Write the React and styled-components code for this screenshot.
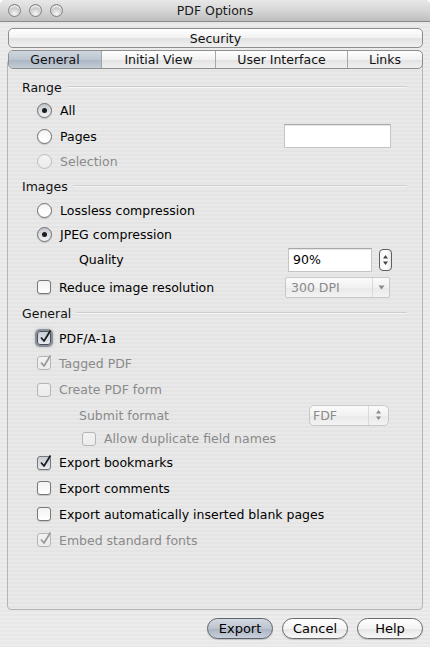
import React from 'react';
import styled, { createGlobalStyle, css } from 'styled-components';

const GlobalStyle = createGlobalStyle`
  html, body {
    margin: 0;
    padding: 0;
    background: #fff;
  }
  body {
    font-family: "DejaVu Sans", "Liberation Sans", sans-serif;
    font-size: 12.5px;
    color: #000;
  }
  * { box-sizing: border-box; }
`;

const stripes = css`
  background: repeating-linear-gradient(to bottom, #ececec 0, #ececec 2px, #e7e7e7 2px, #e7e7e7 4px);
`;

const Window = styled.div`
  width: 430px;
  height: 647px;
  display: flex;
  flex-direction: column;
  border-radius: 5px 5px 0 0;
  overflow: hidden;
  ${stripes}
`;

const TitleBar = styled.div`
  height: 22px;
  flex: none;
  display: grid;
  grid-template-columns: 1fr auto 1fr;
  align-items: center;
  padding: 0 8px;
  background: linear-gradient(#e8e8e8, #d6d6d6 50%, #bebebe);
  border-bottom: 1px solid #8a8a8a;
  font-size: 12.5px;
  color: #1a1a1a;
`;

const Lights = styled.div`
  display: flex;
  gap: 8px;
`;

const Light = styled.span`
  width: 13px;
  height: 13px;
  border-radius: 50%;
  border: 1px solid #808080;
  background: radial-gradient(circle at 50% 80%, #f6f6f6 0, #cfcfcf 50%, #9e9e9e 100%);
  box-shadow: inset 0 2px 1px rgba(255,255,255,0.7);
`;

const Body = styled.div`
  flex: 1;
  display: flex;
  flex-direction: column;
  padding: 6px 7px 0;
`;

const TabStrip = styled.div`
  position: relative;
  z-index: 1;
  margin: 0 0 0 1px;
  display: flex;
  flex-direction: column;
  gap: 2px;
`;

const segBg = css`
  background: linear-gradient(#ffffff, #f1f1f1 50%, #e2e2e2 51%, #f0f0f0);
`;

const SecurityTab = styled.div`
  height: 20px;
  border: 1px solid #8d8d8d;
  border-radius: 5px;
  ${segBg}
  display: flex;
  align-items: center;
  justify-content: center;
  color: #111;
`;

const TabRow = styled.div`
  height: 19px;
  display: flex;
  border: 1px solid #8d8d8d;
  border-radius: 5px;
  overflow: hidden;
  ${segBg}
`;

const Tab = styled.div`
  width: ${p => p.w}px;
  flex: ${p => (p.grow ? 1 : 'none')};
  display: flex;
  align-items: center;
  justify-content: center;
  border-left: ${p => (p.first ? 'none' : '1px solid #a6a6a6')};
  color: #111;
  ${p => p.active && css`
    background: linear-gradient(#cfd6df, #bcc5d1 50%, #aab5c4 51%, #c3ccd7);
  `}
`;

const Panel = styled.div`
  flex: 1;
  margin-top: -10px;
  border: 1px solid #b4b4b4;
  border-radius: 4px;
  padding: 16px 15px 0 14px;
  display: flex;
  flex-direction: column;
  background: repeating-linear-gradient(to bottom, #e9e9e9 0, #e9e9e9 2px, #e4e4e4 2px, #e4e4e4 4px);
`;

const Header = styled.div`
  height: ${p => p.h}px;
  display: flex;
  align-items: center;
  gap: 5px;
  color: #111;
`;

const Rule = styled.div`
  flex: 1;
  height: 2px;
  border-top: 1px solid #cdcdcd;
  border-bottom: 1px solid #f6f6f6;
  margin-top: -1px;
`;

const Row = styled.div`
  height: ${p => p.h}px;
  display: flex;
  align-items: center;
  padding-left: ${p => p.indent}px;
  gap: 8px;
`;

const Label = styled.span`
  color: ${p => (p.disabled ? '#8a8a8a' : '#000')};
  white-space: nowrap;
`;

const Right = styled.div`
  margin-left: auto;
  margin-right: ${p => p.mr}px;
  display: flex;
  align-items: center;
  gap: 7px;
`;

const RadioBox = styled.span`
  width: 15px;
  height: 15px;
  border-radius: 50%;
  flex: none;
  display: flex;
  align-items: center;
  justify-content: center;
  border: 1px solid ${p => (p.disabled ? '#bdbdbd' : '#6e6e6e')};
  background: ${p => p.checked
    ? 'linear-gradient(#c4c8cd, #dfe2e6 60%, #f2f3f5)'
    : p.disabled ? 'linear-gradient(#f3f3f3, #ececec)' : 'linear-gradient(#f2f2f2, #ffffff 70%, #ffffff)'};
  box-shadow: ${p => (p.disabled ? 'none' : '0 1px 1px rgba(0,0,0,0.15)')};
`;

const Dot = styled.span`
  width: 5px;
  height: 5px;
  border-radius: 50%;
  background: #1c1c1c;
`;

const CheckBox = styled.span`
  width: 14px;
  height: 14px;
  flex: none;
  border-radius: 3px;
  display: flex;
  align-items: center;
  justify-content: center;
  border: 1px solid ${p => (p.disabled ? '#b5b5b5' : p.focus ? '#4a4f58' : '#777')};
  background: ${p => p.disabled
    ? 'linear-gradient(#f2f2f2, #ececec)'
    : p.checked ? 'linear-gradient(#c9ced5, #e6e9ee)' : 'linear-gradient(#f2f2f2, #ffffff)'};
  box-shadow: ${p => (p.focus
    ? '0 0 0 2px rgba(90,100,115,0.55), 0 0 3px 2px rgba(90,100,115,0.35)'
    : p.disabled ? 'none' : '0 1px 1px rgba(0,0,0,0.15)')};
  position: relative;
`;

const Mark = styled.svg`
  position: absolute;
  left: 1px;
  top: -3px;
  overflow: visible;
`;

const Field = styled.div`
  width: ${p => p.w}px;
  height: ${p => p.h}px;
  background: #fff;
  border: 1px solid #c4c4c4;
  border-top-color: #a9a9a9;
  box-shadow: inset 0 1px 0 #e6e6e6;
  display: flex;
  align-items: center;
  padding-left: 4px;
`;

const StepperBox = styled.div`
  width: 13px;
  height: 22px;
  border: 1px solid #5f5f5f;
  border-radius: 4px;
  background: linear-gradient(to right, #f6f6f6, #ffffff 50%, #e9e9e9);
  display: flex;
  align-items: center;
  justify-content: center;
`;

const SelectBox = styled.div`
  width: ${p => p.w}px;
  height: ${p => p.h}px;
  border: 1px solid #c8c8c8;
  border-radius: ${p => p.r}px;
  background: linear-gradient(#fbfbfb, #f1f1f1 50%, #e9e9e9 51%, #f3f3f3);
  display: flex;
  align-items: stretch;
  color: #8a8a8a;
`;

const SelectText = styled.span`
  flex: 1;
  display: flex;
  align-items: center;
  padding-left: ${p => p.pl}px;
`;

const SelectArrow = styled.span`
  width: ${p => p.w}px;
  border-left: 1px solid #dadada;
  display: flex;
  align-items: center;
  justify-content: center;
`;

const Footer = styled.div`
  height: 37px;
  flex: none;
  display: flex;
  justify-content: flex-end;
  align-items: flex-start;
  padding-top: 8px;
  gap: 9px;
`;

const Button = styled.div`
  width: 66px;
  height: 21px;
  border-radius: 11px;
  border: 1px solid ${p => (p.primary ? '#5b6270' : '#6a6a6a')};
  background: ${p => p.primary
    ? 'linear-gradient(#d3d9e1, #bcc4cf 50%, #a9b3c1 51%, #c9d0da)'
    : 'linear-gradient(#ffffff, #f4f4f4 50%, #e6e6e6 51%, #f7f7f7)'};
  box-shadow: 0 1px 1px rgba(0,0,0,0.18);
  display: flex;
  align-items: center;
  justify-content: center;
  font-size: 13px;
  color: #000;
`;

function Radio({ checked, disabled }) {
  return (
    <RadioBox checked={checked} disabled={disabled}>
      {checked && <Dot />}
    </RadioBox>
  );
}

function Check({ checked, disabled, focus }) {
  return (
    <CheckBox checked={checked} disabled={disabled} focus={focus}>
      {checked && (
        <Mark width="13" height="15" viewBox="0 0 13 15">
          <path d="M2 8.5 L5 12 L11.5 1.5" fill="none" stroke={disabled ? '#9a9a9a' : '#1e1e1e'} strokeWidth="1.8" strokeLinejoin="round" />
        </Mark>
      )}
    </CheckBox>
  );
}

function Section({ title, h }) {
  return (
    <Header h={h}>
      <span>{title}</span>
      <Rule />
    </Header>
  );
}

function UpDown({ color }) {
  return (
    <svg width="7" height="12" viewBox="0 0 7 12">
      <path d="M3.5 1 L6 4.5 L1 4.5 Z" fill={color} />
      <path d="M3.5 11 L6 7.5 L1 7.5 Z" fill={color} />
    </svg>
  );
}

export default function App() {
  return (
    <>
      <GlobalStyle />
      <Window>
        <TitleBar>
          <Lights>
            <Light />
            <Light />
            <Light />
          </Lights>
          <span>PDF Options</span>
          <span />
        </TitleBar>
        <Body>
          <TabStrip>
            <SecurityTab>Security</SecurityTab>
            <TabRow>
              <Tab first active w={92}>General</Tab>
              <Tab w={114}>Initial View</Tab>
              <Tab w={132}>User Interface</Tab>
              <Tab grow>Links</Tab>
            </TabRow>
          </TabStrip>
          <Panel>
            <Section title="Range" h={22} />
            <Row h={25} indent={15}><Radio checked /><Label>All</Label></Row>
            <Row h={26} indent={15}>
              <Radio /><Label>Pages</Label>
              <Right mr={16}><Field w={107} h={24} /></Right>
            </Row>
            <Row h={25} indent={15}><Radio disabled /><Label disabled>Selection</Label></Row>

            <Section title="Images" h={25} />
            <Row h={23} indent={15}><Radio /><Label>Lossless compression</Label></Row>
            <Row h={24} indent={15}><Radio checked /><Label>JPEG compression</Label></Row>
            <Row h={27} indent={57}>
              <Label>Quality</Label>
              <Right mr={15}>
                <Field w={84} h={24}>90%</Field>
                <StepperBox><UpDown color="#444" /></StepperBox>
              </Right>
            </Row>
            <Row h={28} indent={15}>
              <Check /><Label>Reduce image resolution</Label>
              <Right mr={17}>
                <SelectBox w={105} h={21} r={2}>
                  <SelectText pl={5}>300 DPI</SelectText>
                  <SelectArrow w={17}>
                    <svg width="7" height="5" viewBox="0 0 7 5"><path d="M0.5 0.5 L6.5 0.5 L3.5 4.5 Z" fill="#8a8a8a" /></svg>
                  </SelectArrow>
                </SelectBox>
              </Right>
            </Row>

            <Section title="General" h={25} />
            <Row h={24} indent={15}><Check checked focus /><Label>PDF/A-1a</Label></Row>
            <Row h={26} indent={15}><Check checked disabled /><Label disabled>Tagged PDF</Label></Row>
            <Row h={27} indent={15}><Check disabled /><Label disabled>Create PDF form</Label></Row>
            <Row h={24} indent={57}>
              <Label disabled>Submit format</Label>
              <Right mr={18}>
                <SelectBox w={80} h={21} r={5}>
                  <SelectText pl={3}>FDF</SelectText>
                  <SelectArrow w={20}><UpDown color="#8a8a8a" /></SelectArrow>
                </SelectBox>
              </Right>
            </Row>
            <Row h={23} indent={60}><Check disabled /><Label disabled>Allow duplicate field names</Label></Row>
            <Row h={25} indent={15}><Check checked /><Label>Export bookmarks</Label></Row>
            <Row h={26} indent={15}><Check /><Label>Export comments</Label></Row>
            <Row h={26} indent={15}><Check /><Label>Export automatically inserted blank pages</Label></Row>
            <Row h={26} indent={15}><Check checked disabled /><Label disabled>Embed standard fonts</Label></Row>
          </Panel>
          <Footer>
            <Button primary>Export</Button>
            <Button>Cancel</Button>
            <Button>Help</Button>
          </Footer>
        </Body>
      </Window>
    </>
  );
}
